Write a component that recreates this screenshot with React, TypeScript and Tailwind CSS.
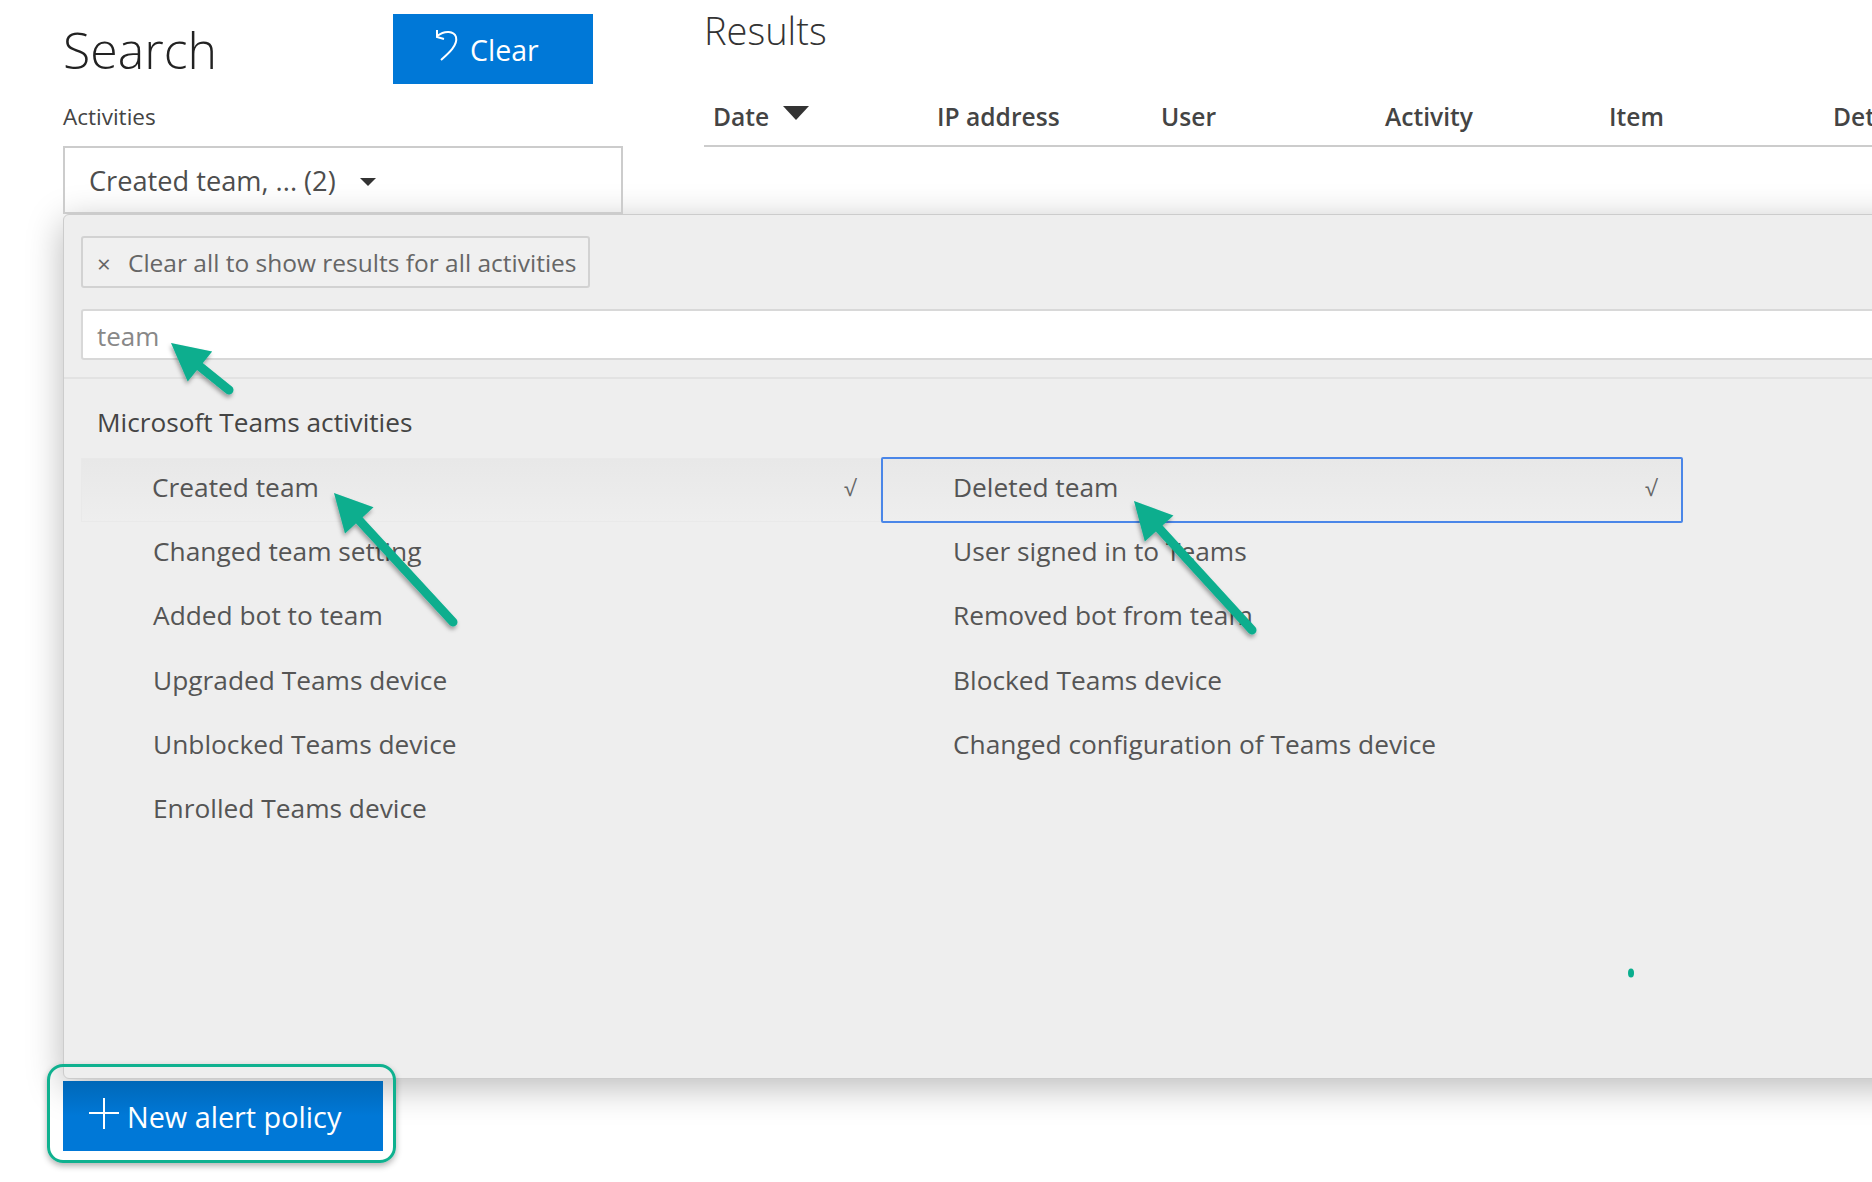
import React from 'react';

const font = "font-['Open_Sans','Noto_Sans',sans-serif]";

const columns = ['Date', 'IP address', 'User', 'Activity', 'Item', 'Details'];

const leftItems = [
  'Created team',
  'Changed team setting',
  'Added bot to team',
  'Upgraded Teams device',
  'Unblocked Teams device',
  'Enrolled Teams device',
];

const rightItems = [
  'Deleted team',
  'User signed in to Teams',
  'Removed bot from team',
  'Blocked Teams device',
  'Changed configuration of Teams device',
];

const Arrow: React.FC<{ x1: number; y1: number; x2: number; y2: number }> = ({ x1, y1, x2, y2 }) => {
  // head is drawn at (x2, y2), tail at (x1, y1)
  const a = Math.atan2(y1 - y2, x1 - x2);
  const len = 42;
  const spread = 0.48;
  const hx = x2 + Math.cos(a) * (len - 8);
  const hy = y2 + Math.sin(a) * (len - 8);
  const p1 = `${x2 + Math.cos(a + spread) * len},${y2 + Math.sin(a + spread) * len}`;
  const p2 = `${x2 + Math.cos(a - spread) * len},${y2 + Math.sin(a - spread) * len}`;
  return (
    <g>
      <line x1={x1} y1={y1} x2={hx} y2={hy} stroke="#09ae8e" strokeWidth={9} strokeLinecap="round" />
      <polygon points={`${x2},${y2} ${p1} ${p2}`} fill="#09ae8e" />
    </g>
  );
};

const ActivityRow: React.FC<{ label: string; first?: boolean; focused?: boolean }> = ({ label, first, focused }) => {
  if (first) {
    return (
      <div
        className={`flex items-center justify-between bg-gradient-to-b from-[#e8e8e8] to-[#eeeeee] pb-[5px] pl-[70px] pr-[24px] ${
          focused
            ? '-my-[1px] h-[66px] rounded-[2px] border-2 border-[#4a86e8]'
            : 'h-[64px] border border-[#e9e9e9]'
        }`}
      >
        <span>{label}</span>
        <span className="text-[22px] text-[#666]">√</span>
      </div>
    );
  }
  return <div className="flex h-[64.3px] items-center pb-[5px] pl-[72px]">{label}</div>;
};

export default function App() {
  return (
    <div className={`relative h-[1182px] w-[1872px] overflow-hidden bg-white ${font}`}>
      <div className="flex">
        {/* Search form */}
        <div className="w-[704px] shrink-0 pl-[63px]">
          <div className="flex h-[104px] items-start">
            <h1 className="mt-[18px] w-[330px] text-[50px] leading-[64px] font-light text-[#222]">Search</h1>
            <button className="mt-[14px] flex h-[70px] w-[200px] items-center gap-[9px] bg-[#0078d7] pt-[2px] pl-[42px] text-[28.5px] text-white">
              <svg className="mb-[10px]" width="26" height="34" viewBox="0 0 26 32" fill="none" stroke="white" strokeWidth="2">
                <path d="M6 31 C14 24 23 16 21 8 C19 2 10 1 2 7" />
                <path d="M2 1 L2 8 L9 10" />
              </svg>
              <span>Clear</span>
            </button>
          </div>
          <div className="h-[42px] text-[22.5px] leading-[26px] text-[#444]">Activities</div>
          <div className="flex h-[68px] w-[560px] items-center gap-[24px] border-2 border-[#ccc] pt-[2px] pl-[24px] text-[27.2px] text-[#4d4d4d]">
            <span>Created team, ... (2)</span>
            <span className="mt-[2px] h-0 w-0 border-x-[8px] border-t-[8px] border-x-transparent border-t-[#333]" />
          </div>
        </div>

        {/* Results */}
        <div className="min-w-0 flex-1">
          <h2 className="mt-[6px] text-[38px] leading-[48px] font-light text-[#333]">Results</h2>
          <div className="mt-[36px] flex h-[57px] w-[1168px] border-b-2 border-[#ccc] pt-[9px] pl-[9px] text-[24.6px] font-semibold text-[#444]">
            {columns.map((c) => (
              <div key={c} className="flex w-[224px] shrink-0 items-start gap-[14px]">
                <span>{c}</span>
                {c === 'Date' && (
                  <span className="mt-[7px] h-0 w-0 border-x-[13px] border-t-[14px] border-x-transparent border-t-[#333]" />
                )}
              </div>
            ))}
          </div>
        </div>
      </div>

      {/* Activities dropdown panel */}
      <div className="ml-[63px] h-[865px] w-[1860px] rounded-l-[6px] border border-[#ccc] bg-[#eeeeee] shadow-[0_8px_36px_rgba(0,0,0,0.28)]">
        <div className="pt-[21px] pl-[17px]">
          <div className="flex h-[52px] w-[509px] items-center rounded-[3px] border-2 border-[#d2d2d2] bg-[#f0f0f0] pt-[3px] text-[24.5px] text-[#666]">
            <span className="w-[45px] pl-[14px] text-[24px] leading-none">×</span>
            <span>Clear all to show results for all activities</span>
          </div>
          <div className="mt-[21px] flex h-[51px] items-center rounded-l-[3px] border-2 border-[#d8d8d8] bg-white pt-[3px] pl-[14px] text-[26px] text-[#888]">
            team
          </div>
        </div>
        <div className="mt-[17px] h-[2px] bg-[#e2e2e2]" />
        <div className="pt-[25px] pl-[33px] text-[26.2px] leading-[36px] text-[#444]">Microsoft Teams activities</div>
        <div className="mt-[18px] flex pl-[17px] text-[26.3px] text-[#555]">
          <div className="w-[800px]">
            {leftItems.map((item, i) => (
              <ActivityRow key={item} label={item} first={i === 0} />
            ))}
          </div>
          <div className="w-[802px]">
            {rightItems.map((item, i) => (
              <ActivityRow key={item} label={item} first={i === 0} focused={i === 0} />
            ))}
          </div>
        </div>
      </div>

      <button className="relative ml-[63px] mt-[2px] flex h-[70px] w-[320px] items-center gap-[7px] bg-gradient-to-b from-[#0068b8] to-[#0078d7] to-50% pt-[2px] pl-[25px] text-[28.8px] text-white">
        <svg className="mb-[7px]" width="32" height="32" viewBox="0 0 32 32" stroke="white" strokeWidth="2">
          <path d="M1 15 H31 M16 0 V31" />
        </svg>
        <span>New alert policy</span>
      </button>

      {/* Annotations laid over the screenshot */}
      <div className="pointer-events-none absolute top-[1064px] left-[47px] h-[99px] w-[349px] rounded-[16px] border-[3px] border-[#0fb18f] shadow-[0_3px_6px_rgba(0,0,0,0.3)]" />
      <svg className="pointer-events-none absolute top-0 left-0" width="1872" height="1182">
        <defs>
          <filter id="arrowShadow" x="-20%" y="-20%" width="140%" height="140%">
            <feDropShadow dx="-1" dy="3" stdDeviation="2" floodColor="#000" floodOpacity="0.35" />
          </filter>
        </defs>
        <g filter="url(#arrowShadow)">
          <Arrow x1={229} y1={390} x2={171} y2={343} />
          <Arrow x1={453} y1={622} x2={334} y2={493} />
          <Arrow x1={1252} y1={630} x2={1134} y2={501} />
        </g>
        <ellipse cx="1631" cy="973" rx="3" ry="4.5" fill="#09ae8e" />
      </svg>
    </div>
  );
}
